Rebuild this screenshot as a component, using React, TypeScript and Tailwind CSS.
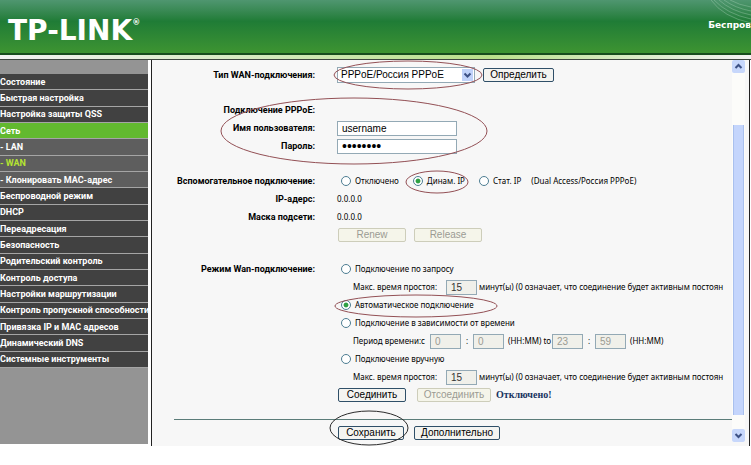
import React from "react";
import clsx from "clsx";

const menu: { label: string; kind?: "active" | "sub" | "current" }[] = [
  { label: "Состояние" },
  { label: "Быстрая настройка" },
  { label: "Настройка защиты QSS" },
  { label: "Сеть", kind: "active" },
  { label: "- LAN", kind: "sub" },
  { label: "- WAN", kind: "current" },
  { label: "- Клонировать MAC-адрес", kind: "sub" },
  { label: "Беспроводной режим" },
  { label: "DHCP" },
  { label: "Переадресация" },
  { label: "Безопасность" },
  { label: "Родительский контроль" },
  { label: "Контроль доступа" },
  { label: "Настройки маршрутизации" },
  { label: "Контроль пропускной способности" },
  { label: "Привязка IP и MAC адресов" },
  { label: "Динамический DNS" },
  { label: "Системные инструменты" },
];

function Header() {
  return (
    <header className="relative flex h-[53px] items-center justify-between overflow-hidden bg-linear-to-b from-[#4f9670] via-[#1f7c36] via-40% to-[#3d9431] text-white">
      <svg className="absolute top-0 right-0 h-6 w-10" viewBox="0 0 40 24" fill="none" stroke="#a5cfb4" strokeOpacity="0.4">
        <path d="M3 0Q16 14 40 19M8 0Q20 11 40 15M13 0Q24 8 40 11M19 0Q28 5 40 7M0 0Q12 17 40 23" />
      </svg>
      <div className="flex items-start pt-2 pl-2 font-['DejaVu_Sans',sans-serif] leading-none font-bold">
        <span className="text-[28px]">TP-LINK</span>
        <span className="pt-0.5 text-[8px]">®</span>
      </div>
      <div className="pb-1 font-['DejaVu_Sans',sans-serif] text-[9px] leading-3 font-bold whitespace-nowrap">Беспров</div>
    </header>
  );
}

function Sidebar() {
  return (
    <nav className="w-[148px] shrink-0 bg-[#949494] pt-3.5 pb-19">
      <ul className="grid h-[294px] auto-rows-fr grid-cols-1">
        {menu.map((m) => (
          <li
            key={m.label}
            className={clsx(
              "flex items-center border-b border-[#a5a5a5]",
              !m.kind && "bg-[#414141] text-white",
              m.kind === "active" && "bg-[#62b92f] text-white",
              m.kind === "sub" && "bg-[#5e5e5e] text-white",
              m.kind === "current" && "bg-[#5e5e5e] text-[#b5e332]",
            )}
          >
            <a href="#" className="text-[9px] leading-3 font-bold whitespace-nowrap">
              {m.label}
            </a>
          </li>
        ))}
      </ul>
    </nav>
  );
}

function Row({ label, htmlFor, children }: { label?: string; htmlFor?: string; children?: React.ReactNode }) {
  return (
    <div className="flex h-[18px] items-center gap-[22px]">
      <label htmlFor={htmlFor} className="w-[163px] shrink-0 text-right text-[9px] font-bold">
        {label}
      </label>
      <div className="flex min-w-0 flex-1 items-center font-['Noto_Sans','Liberation_Sans',sans-serif] text-[8px]">
        {children}
      </div>
    </div>
  );
}

function Radio({ name, label, checked }: { name: string; label: string; checked?: boolean }) {
  return (
    <label className="flex items-center gap-1">
      <input
        type="radio"
        name={name}
        defaultChecked={checked}
        className="ml-1 size-2.5 shrink-0 appearance-none rounded-full border border-[#4d7d92] bg-white checked:bg-[radial-gradient(circle,#2fa043_35%,#ffffff_50%)]"
      />
      {label}
    </label>
  );
}

function Btn({ className, disabled, children }: { className: string; disabled?: boolean; children: React.ReactNode }) {
  return (
    <button
      type="button"
      disabled={disabled}
      className={clsx(
        "h-3.5 shrink-0 rounded-[2px] border font-['Liberation_Sans',sans-serif] text-[10px] leading-3",
        disabled ? "border-[#cdcdba] bg-[#f5f5ea] text-[#9b9b93]" : "border-[#2f4f68] bg-[#f4f4f1] text-black",
        className,
      )}
    >
      {children}
    </button>
  );
}

function Num({ value, label, muted }: { value: string; label: string; muted?: boolean }) {
  return (
    <input
      aria-label={label}
      defaultValue={value}
      className={clsx(
        "h-[15px] w-[31px] shrink-0 border border-[#93a9b5] bg-[#f0f0ea] px-1 font-['Liberation_Sans',sans-serif] text-[10px]",
        muted ? "text-[#9b9b93]" : "text-[#333333]",
      )}
    />
  );
}

function IdleTime() {
  return (
    <div className="flex items-center pl-4">
      <span className="w-[93px] shrink-0">Макс. время простоя:</span>
      <Num value="15" label="Макс. время простоя" />
      <span className="pl-0.5">минут(ы) (0 означает, что соединение будет активным постоян</span>
    </div>
  );
}

function Arrow({ up }: { up?: boolean }) {
  return (
    <svg className="size-[13px] rounded-[2px] bg-[#c7d7fb]" viewBox="0 0 13 13" fill="none" stroke="#3d5185" strokeWidth="2">
      <path d={up ? "M3.5 8L6.5 5L9.5 8" : "M3.5 5L6.5 8L9.5 5"} />
    </svg>
  );
}

function Marks() {
  return (
    <svg className="pointer-events-none absolute top-0 left-0 h-[386px] w-[360px]" fill="none" stroke="#935055">
      <ellipse cx="256" cy="15" rx="74" ry="14" />
      <ellipse cx="202" cy="71" rx="133" ry="33" />
      <ellipse cx="285" cy="122" rx="31" ry="11" />
      <ellipse cx="264" cy="246" rx="81" ry="11" />
      <ellipse cx="217" cy="368" rx="39" ry="17" stroke="#2b2b2b" />
    </svg>
  );
}

function WanForm() {
  return (
    <form className="relative min-w-0 flex-1 leading-3 whitespace-nowrap text-black">
      <div className="py-1.5">
        <Row label="Тип WAN-подключения:" htmlFor="type">
          <div className="relative">
            <select
              id="type"
              className="block h-4 w-[138px] appearance-none border border-[#93a9b5] bg-white pl-[3px] font-['Liberation_Sans',sans-serif] text-[10px] leading-3"
            >
              <option>PPPoE/Россия PPPoE</option>
            </select>
            <svg className="pointer-events-none absolute top-0.5 right-0.5 h-3 w-[11px] bg-[#c0d2fa]" viewBox="0 0 11 12" fill="none" stroke="#3d5185" strokeWidth="2">
              <path d="M2.5 4.5L5.5 7.5L8.5 4.5" />
            </svg>
          </div>
          <Btn className="ml-2 w-[71px]">Определить</Btn>
        </Row>
      </div>

      <div className="pt-[11px]">
        <Row label="Подключение PPPoE:" />
        <Row label="Имя пользователя:" htmlFor="user">
          <input id="user" defaultValue="username" className="h-[15px] w-[120px] border border-[#93a9b5] bg-white px-1 font-['Liberation_Sans',sans-serif] text-[10px]" />
        </Row>
        <Row label="Пароль:" htmlFor="pass">
          <input id="pass" type="password" defaultValue="password" className="h-[15px] w-[120px] border border-[#93a9b5] bg-white px-1 font-['Liberation_Sans',sans-serif] text-[14px]" />
        </Row>
      </div>

      <div className="pt-[17px]">
        <Row label="Вспомогательное подключение:">
          <div className="flex gap-2.5">
            <Radio name="second" label="Отключено" />
            <Radio name="second" label="Динам. IP" checked />
            <Radio name="second" label="Стат. IP" />
            <span>(Dual Access/Россия PPPoE)</span>
          </div>
        </Row>
        <Row label="IP-адерс:">0.0.0.0</Row>
        <Row label="Маска подсети:">0.0.0.0</Row>
        <Row>
          <Btn disabled className="ml-px w-[68px]">Renew</Btn>
          <Btn disabled className="ml-2 w-[68px]">Release</Btn>
        </Row>
      </div>

      <div className="pt-4">
        <Row label="Режим Wan-подключение:">
          <Radio name="mode" label="Подключение по запросу" />
        </Row>
        <Row><IdleTime /></Row>
        <Row><Radio name="mode" label="Автоматическое подключение" checked /></Row>
        <Row><Radio name="mode" label="Подключение в зависимости от времени" /></Row>
        <Row>
          <div className="flex items-center pl-4">
            <span className="w-[77px]">Период времени:с</span>
            <Num value="0" label="Часы начала" muted />
            <span className="w-3 text-center">:</span>
            <Num value="0" label="Минуты начала" muted />
            <span className="w-12 pl-1">(HH:MM) to</span>
            <Num value="23" label="Часы конца" muted />
            <span className="w-3 text-center">:</span>
            <Num value="59" label="Минуты конца" muted />
            <span className="pl-1">(HH:MM)</span>
          </div>
        </Row>
        <Row><Radio name="mode" label="Подключение вручную" /></Row>
        <Row><IdleTime /></Row>
        <Row>
          <Btn className="ml-px w-[68px]">Соединить</Btn>
          <Btn disabled className="ml-[11px] w-[74px]">Отсоединить</Btn>
          <span className="pl-[5px] font-['Liberation_Serif',serif] text-[10px] font-bold text-[#17335f]">Отключено!</span>
        </Row>
      </div>

      <hr className="mt-[15px] mb-1 ml-[22px] border-[#5b7c79]" />
      <Row>
        <Btn className="ml-px w-[66px]">Сохранить</Btn>
        <Btn className="ml-2.5 w-[86px]">Дополнительно</Btn>
      </Row>
      <Marks />
    </form>
  );
}

export default function App() {
  return (
    <div className="min-h-screen overflow-hidden bg-white font-[Roboto,'Liberation_Sans',sans-serif]">
      <Header />
      <div className="h-0.5 bg-[#174d1d]" />
      <div className="h-1 bg-linear-to-r from-[#f3f3f3] via-[#b9e08a] via-65% to-[#f3f3f3]" />
      <div className="h-px bg-[#3d463f]" />
      <div className="flex items-start">
        <Sidebar />
        <div className="mr-px ml-[3px] flex min-w-0 flex-1 border-x border-[#222222] bg-[#f7f7f7] pb-1">
          <WanForm />
          <div className="mr-1 flex w-[13px] shrink-0 flex-col justify-between bg-[#fcfcfa]">
            <Arrow up />
            <div className="mt-[38px] h-[290px] w-[11px] self-center border-x border-[#a9c0ee] bg-[#c4d5fc]" />
            <Arrow />
          </div>
        </div>
      </div>
    </div>
  );
}
